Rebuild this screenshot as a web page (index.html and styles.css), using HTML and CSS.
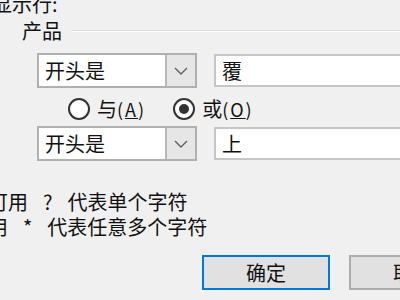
FILE: index.html
```html
<!DOCTYPE html>
<html>
<head>
<meta charset="utf-8">
<link rel="stylesheet" href="styles.css">
</head>
<body>
<div class="dialog">
  <div class="title">显示行:</div>
  <div class="group-head"><span>产品</span><div class="rule"></div></div>
  <div class="crit-row">
    <div class="combo">
      <div class="combo-text">开头是</div>
      <div class="combo-btn"><svg width="14" height="8" viewBox="0 0 14 8"><polyline points="1,1 7,7 13,1" fill="none" stroke="#606060" stroke-width="1.4"/></svg></div>
    </div>
    <div class="edit">覆</div>
  </div>
  <div class="radios">
    <div class="radio-item"><span class="radio"></span><span class="label">与<span class="acc">(<u>A</u>)</span></span></div>
    <div class="radio-item"><span class="radio checked"></span><span class="label">或<span class="acc">(<u>O</u>)</span></span></div>
  </div>
  <div class="crit-row second">
    <div class="combo">
      <div class="combo-text">开头是</div>
      <div class="combo-btn"><svg width="14" height="8" viewBox="0 0 14 8"><polyline points="1,1 7,7 13,1" fill="none" stroke="#606060" stroke-width="1.4"/></svg></div>
    </div>
    <div class="edit">上</div>
  </div>
  <div class="hint">
    <div>可用 ? 代表单个字符</div>
    <div>用 * 代表任意多个字符</div>
  </div>
  <div class="buttons">
    <div class="btn default">确定</div>
    <div class="btn">取消</div>
  </div>
</div>
</body>
</html>
```
FILE: styles.css
```css
html, body {
  margin: 0;
  height: 300px;
  overflow: hidden;
  background: #f0f0f0;
}
.dialog {
  width: 560px;
  font-family: "Noto Sans CJK SC", sans-serif;
  font-size: 20px;
  color: #111;
}
.title {
  line-height: 20px;
  margin: -6px 0 0 -8px;
}
.group-head {
  display: flex;
  align-items: center;
  margin: 7px 0 0 22px;
  height: 20px;
  line-height: 20px;
}
.rule {
  flex: 1;
  height: 0;
  border-top: 1px solid #d8d8d8;
  border-bottom: 1px solid #ffffff;
  margin-left: 10px;
}
.crit-row {
  display: flex;
  align-items: center;
  gap: 17px;
  margin: 12px 0 0 37px;
}
.crit-row.second {
  margin-top: 5px;
}
.combo {
  display: flex;
  width: 160px;
  height: 35px;
  box-sizing: border-box;
  border: 2px solid #b0b0b0;
  background: #fff;
}
.combo-text {
  flex: 1;
  padding-left: 6px;
  line-height: 31px;
}
.combo-btn {
  width: 28px;
  background: #e6e6e6;
  border-left: 2px solid #b8b8b8;
  display: flex;
  align-items: center;
  justify-content: center;
}
.edit {
  width: 240px;
  height: 33px;
  box-sizing: border-box;
  border: 2px solid #c6c6c6;
  background: #fff;
  padding-left: 6px;
  line-height: 29px;
}
.radios {
  display: flex;
  gap: 27px;
  margin: 9px 0 0 68px;
  height: 24px;
}
.radio-item {
  display: flex;
  align-items: center;
  gap: 7px;
}
.radio {
  width: 22px;
  height: 22px;
  box-sizing: border-box;
  border: 2px solid #333;
  border-radius: 50%;
  background: #fff;
  display: flex;
  align-items: center;
  justify-content: center;
}
.radio.checked::after {
  content: "";
  width: 10px;
  height: 10px;
  border-radius: 50%;
  background: #333;
}
.label {
  line-height: 24px;
}
.acc {
  font-size: 18px;
  letter-spacing: 2px;
}
.hint {
  margin: 28px 0 0 -12px;
  line-height: 25px;
  word-spacing: 10.5px;
}
.buttons {
  display: flex;
  gap: 19px;
  margin: 16px 0 0 202px;
}
.btn {
  width: 128px;
  height: 35px;
  box-sizing: border-box;
  border: 2px solid #adadad;
  background: #e1e1e1;
  text-align: center;
  line-height: 31px;
}
.btn.default {
  border-color: #0078d7;
}
```
